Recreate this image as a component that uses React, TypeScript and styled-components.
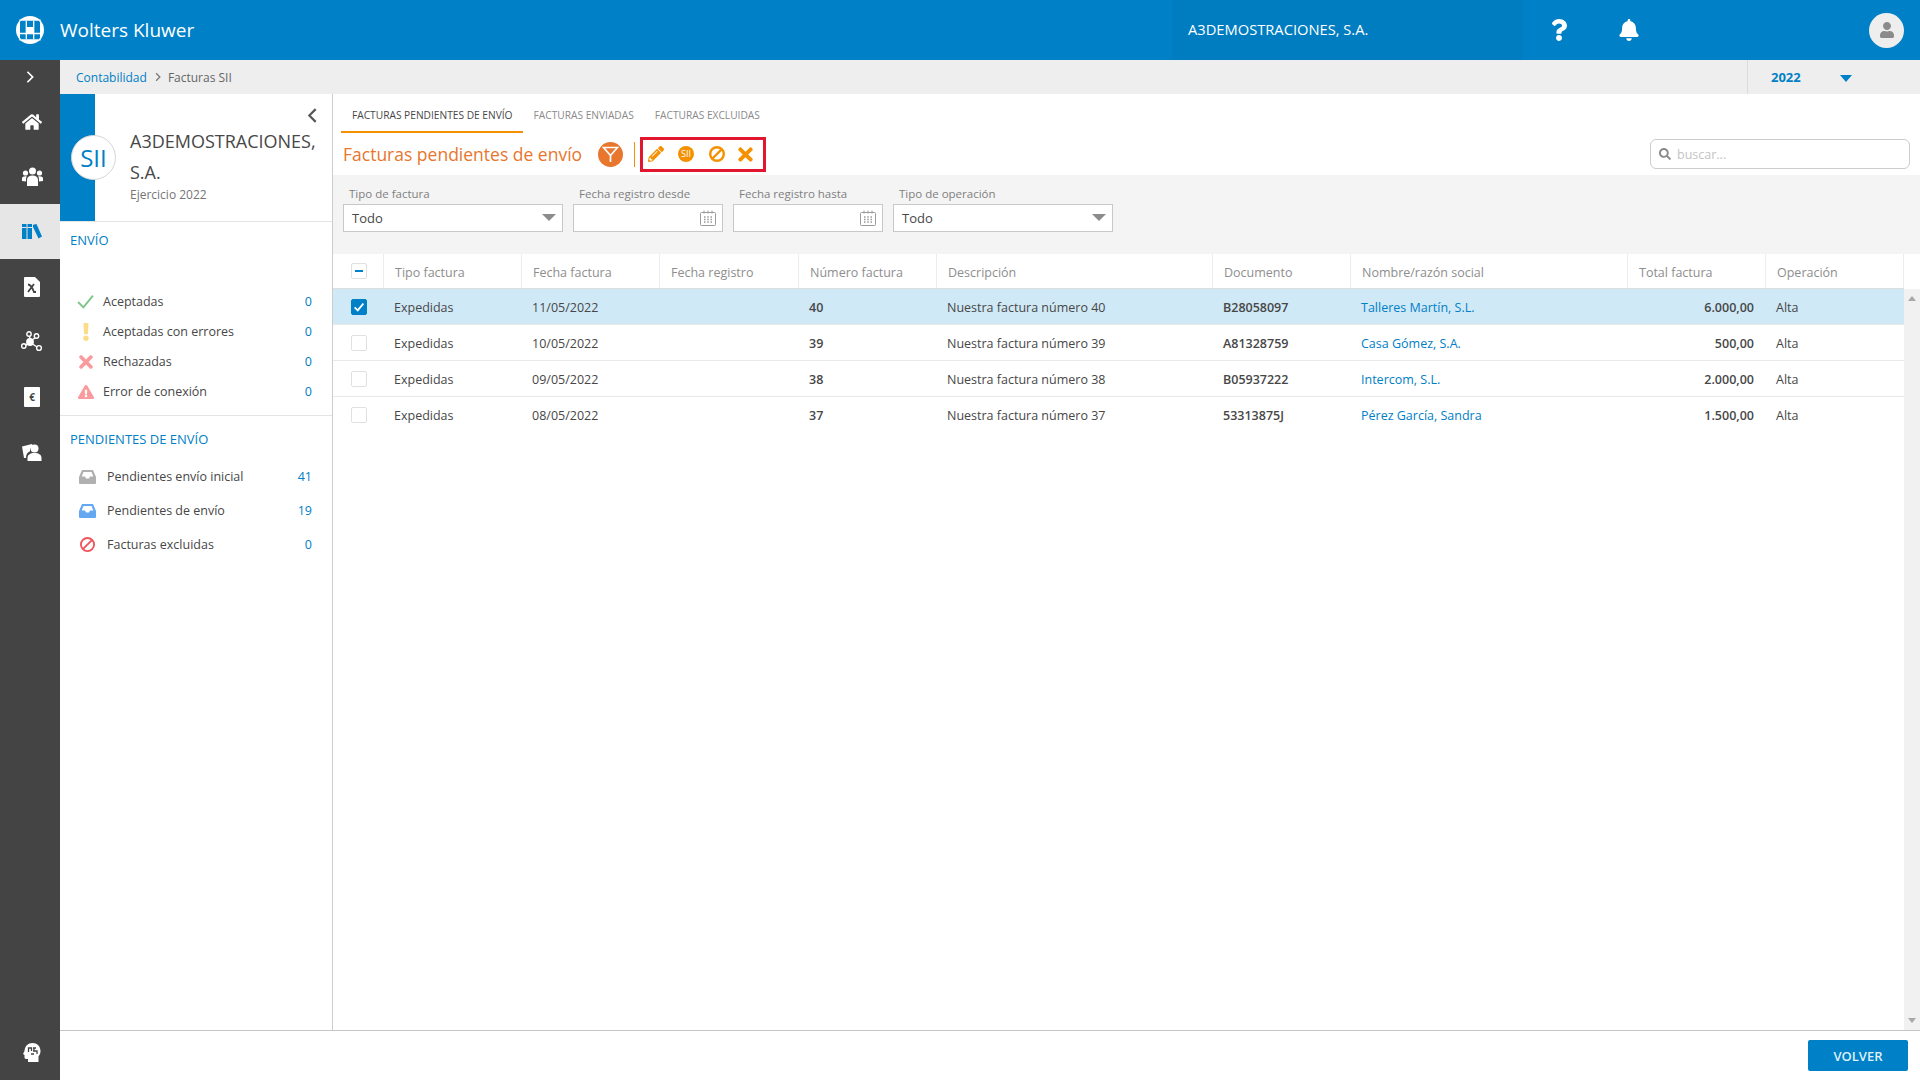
import { ReactNode } from "react";
import styled, { createGlobalStyle } from "styled-components";
import { FaBell, FaExclamation, FaExclamationTriangle, FaHome, FaPencilAlt, FaQuestion, FaSearch, FaTimes, FaUser } from "react-icons/fa";

const BLUE = "#0080c6";
const ORANGE = "#f59100";

const GlobalStyle = createGlobalStyle`
  html, body { margin: 0; padding: 0; height: 100%; overflow: hidden; background: #fff; }
  body { font-family: "Open Sans", "Noto Sans", sans-serif; color: #474747; }
  * { box-sizing: border-box; }
`;

const Page = styled.div`
  width: 1920px;
  height: 1080px;
  display: flex;
  flex-direction: column;
`;

const TopBar = styled.header`
  height: 60px;
  flex: none;
  display: flex;
  align-items: center;
  background: ${BLUE};
  color: #fff;
`;

const LogoCell = styled.div`
  width: 60px;
  display: flex;
  justify-content: center;
`;

const Brand = styled.div`
  font-size: 19px;
  font-weight: 500;
  flex: 1;
  padding-bottom: 1px;
`;

const CompanyBlock = styled.div`
  width: 351px;
  height: 60px;
  padding: 0 0 2px 16px;
  display: flex;
  align-items: center;
  font-size: 14.7px;
  font-weight: 500;
  background: #007cc0;
`;

const TopIcons = styled.div`
  display: flex;
  align-items: center;
  height: 60px;
  font-size: 22px;
`;

const TopIcon = styled.div<{ $w: number }>`
  width: ${(p) => p.$w}px;
  display: flex;
  justify-content: center;
`;

const Avatar = styled.div`
  width: 35px;
  height: 35px;
  margin-left: 206px;
  margin-right: 16px;
  border-radius: 50%;
  background: #eee;
  color: #8b8b8b;
  font-size: 16px;
  display: flex;
  align-items: center;
  justify-content: center;
`;

const Body = styled.div`
  flex: 1;
  display: flex;
  min-height: 0;
`;

const Rail = styled.nav`
  width: 60px;
  flex: none;
  background: #444;
  color: #fff;
  display: flex;
  flex-direction: column;
`;

const RailToggle = styled.div`
  height: 34px;
  display: flex;
  align-items: center;
  justify-content: center;
`;

const RailItem = styled.div<{ $active?: boolean }>`
  height: 55px;
  padding-left: 4px;
  display: flex;
  align-items: center;
  justify-content: center;
  font-size: 20px;
  background: ${(p) => (p.$active ? "#e6e6e6" : "transparent")};
  color: ${(p) => (p.$active ? BLUE : "#fff")};
`;

const RailBottom = styled(RailItem)`
  margin-top: auto;
`;

const EuroTile = styled.div`
  width: 16px;
  height: 20px;
  border-radius: 1px;
  background: #fff;
  color: #444;
  font-size: 10px;
  font-weight: 700;
  line-height: 20px;
  text-align: center;
`;

const Content = styled.div`
  flex: 1;
  display: flex;
  flex-direction: column;
  min-width: 0;
`;

const Crumbs = styled.div`
  height: 34px;
  flex: none;
  background: #eee;
  display: flex;
  align-items: center;
  padding-left: 16px;
  font-size: 12px;
  color: #666;
`;

const CrumbLink = styled.span`
  color: ${BLUE};
`;

const CrumbSep = styled.span`
  margin: 0 5px 0 6px;
  display: flex;
`;

const YearBlock = styled.div`
  margin-left: auto;
  width: 173px;
  height: 34px;
  border-left: 1px solid #dcdcdc;
  padding: 0 0 1px 23px;
  display: flex;
  align-items: center;
  color: ${BLUE};
  font-weight: 700;
  font-size: 13px;
`;

const YearCaret = styled.span`
  margin-left: 39px;
  margin-top: 3px;
  border-left: 6.5px solid transparent;
  border-right: 6.5px solid transparent;
  border-top: 7px solid ${BLUE};
`;

const Workspace = styled.div`
  flex: 1;
  display: flex;
  min-height: 0;
`;

const SidePanel = styled.aside`
  width: 273px;
  flex: none;
  border-right: 1px solid #ccc;
  display: flex;
  flex-direction: column;
`;

const PanelHead = styled.div`
  position: relative;
  height: 128px;
  flex: none;
  display: flex;
  border-bottom: 1px solid #e4e4e4;
`;

const Stripe = styled.div`
  width: 35px;
  height: 127px;
  background: ${BLUE};
`;

const SiiBadge = styled.div`
  position: absolute;
  left: 11px;
  top: 41px;
  width: 45px;
  height: 45px;
  border-radius: 50%;
  background: #fff;
  border: 1px solid #d6d6d6;
  color: ${BLUE};
  font-size: 24px;
  display: flex;
  align-items: center;
  justify-content: center;
`;

const PanelInfo = styled.div`
  flex: 1;
  padding: 10px 0 0 35px;
  display: flex;
  flex-direction: column;
`;

const Collapse = styled.div`
  height: 22px;
  padding-right: 11px;
  display: flex;
  justify-content: flex-end;
  align-items: center;
`;

const CompanyName = styled.div`
  font-size: 18px;
  line-height: 31px;
  white-space: nowrap;
  color: #474747;
`;

const Exercise = styled.div`
  font-size: 12px;
  line-height: 14px;
  color: #757575;
`;

const SectionTitle = styled.div<{ $h: number; $pad: number }>`
  height: ${(p) => p.$h}px;
  padding: ${(p) => p.$pad}px 0 0 10px;
  font-size: 13px;
  line-height: 22px;
  color: ${BLUE};
`;

const SideList = styled.div<{ $gap?: number }>`
  padding-bottom: ${(p) => p.$gap ?? 0}px;
  border-bottom: ${(p) => (p.$gap ? "1px solid #e4e4e4" : "none")};
`;

const SideRow = styled.div<{ $h: number; $iconW: number }>`
  height: ${(p) => p.$h}px;
  padding: 0 20px 1px 0;
  display: grid;
  grid-template-columns: ${(p) => p.$iconW}px 1fr auto;
  align-items: center;
  font-size: 12.5px;
`;

const SideIcon = styled.div<{ $color: string; $size: number }>`
  display: flex;
  justify-content: center;
  padding-left: 10px;
  margin-right: 2px;
  color: ${(p) => p.$color};
  font-size: ${(p) => p.$size}px;
`;

const SideCount = styled.div`
  color: ${BLUE};
`;

const Main = styled.main`
  flex: 1;
  display: flex;
  flex-direction: column;
  min-width: 0;
`;

const Tabs = styled.div`
  height: 39px;
  flex: none;
  padding-left: 8px;
  display: flex;
`;

const Tab = styled.div<{ $active?: boolean }>`
  height: 39px;
  padding: 4px 10px 0 11px;
  display: flex;
  align-items: center;
  font-size: 10.2px;
  color: ${(p) => (p.$active ? "#474747" : "#8a8a8a")};
  border-bottom: 2px solid ${(p) => (p.$active ? ORANGE : "transparent")};
`;

const TitleRow = styled.div`
  height: 42px;
  flex: none;
  padding: 0 10px;
  display: flex;
  align-items: center;
`;

const Title = styled.h1`
  margin: 0 0 1px;
  width: 255px;
  font-size: 17.5px;
  font-weight: 400;
  white-space: nowrap;
  color: #e8762d;
`;

const FilterDot = styled.div`
  width: 25px;
  height: 25px;
  border-radius: 50%;
  background: #e8762d;
  display: flex;
  align-items: center;
  justify-content: center;
`;

const ActionSep = styled.div`
  width: 1px;
  height: 25px;
  margin: 0 5px 0 11px;
  background: ${ORANGE};
`;

const ActionBox = styled.div`
  width: 126px;
  height: 35px;
  border: 3px solid #e2162f;
  display: grid;
  grid-template-columns: 26px 34px 27px 30px;
  align-items: center;
  justify-items: center;
  color: ${ORANGE};
  font-size: 16px;
`;

const SiiIcon = styled.div`
  width: 16px;
  height: 16px;
  border-radius: 50%;
  background: ${ORANGE};
  color: #fff;
  font-size: 9px;
  line-height: 16px;
  text-align: center;
`;

const Search = styled.div`
  margin-left: auto;
  width: 260px;
  height: 30px;
  border: 1px solid #ccc;
  border-radius: 6px;
  padding-left: 8px;
  display: flex;
  align-items: center;
  gap: 6px;
  font-size: 12.5px;
  color: #c4c4c4;
  svg { color: #8a8a8a; font-size: 12px; }
`;

const FilterBand = styled.div`
  height: 79px;
  flex: none;
  background: #f4f4f4;
  padding: 12px 0 0 10px;
  display: flex;
  gap: 10px;
`;

const Field = styled.div<{ $w: number }>`
  width: ${(p) => p.$w}px;
`;

const FieldLabel = styled.div`
  height: 17px;
  padding-left: 6px;
  font-size: 11.5px;
  line-height: 13px;
  color: #808080;
`;

const FieldBox = styled.div`
  height: 28px;
  background: #fff;
  border: 1px solid #c8c8c8;
  padding: 0 6px 1px 8px;
  display: flex;
  align-items: center;
  justify-content: space-between;
  font-size: 13px;
  color: #474747;
`;

const SelectCaret = styled.span`
  border-left: 7px solid transparent;
  border-right: 7px solid transparent;
  border-top: 7px solid #8c8c8c;
`;

const TableArea = styled.div`
  flex: 1;
  display: grid;
  grid-template-columns: 1fr 16px;
  grid-template-rows: 35px 1fr;
  min-height: 0;
`;

const COLS = "51px 138px 138px 139px 138px 276px 138px 277px 138px 138px";

const HeadRow = styled.div`
  grid-column: 1 / 2;
  display: grid;
  grid-template-columns: ${COLS};
  border-bottom: 1px solid #dedede;
`;

const HeadCell = styled.div`
  padding: 2px 0 0 11px;
  display: flex;
  align-items: center;
  border-right: 1px solid #ececec;
  font-size: 12.5px;
  color: #8e8e8e;
`;

const CheckCell = styled.div`
  padding-left: 18px;
  display: flex;
  align-items: center;
  border-right: 1px solid #ececec;
`;

const HeadCorner = styled.div``;

const Rows = styled.div`
  grid-column: 1 / 2;
`;

const Row = styled.div<{ $selected?: boolean }>`
  height: 36px;
  display: grid;
  grid-template-columns: ${COLS};
  align-items: center;
  font-size: 12.5px;
  background: ${(p) => (p.$selected ? "#d0e9f7" : "#fff")};
  border-bottom: 1px solid #e8e8e8;
  &:last-child { border-bottom: 0; }
`;

const RowCheck = styled.div`
  padding-left: 18px;
  display: flex;
  align-items: center;
`;

const Cell = styled.div<{ $bold?: boolean; $link?: boolean; $right?: boolean }>`
  padding: ${(p) => (p.$right ? "1px 12px 0 0" : "1px 0 0 10px")};
  text-align: ${(p) => (p.$right ? "right" : "left")};
  font-weight: ${(p) => (p.$bold ? 600 : 400)};
  color: ${(p) => (p.$link ? BLUE : "#474747")};
  white-space: nowrap;
`;

const Box = styled.div<{ $checked?: boolean }>`
  width: 16px;
  height: 16px;
  border-radius: 2px;
  border: 1px solid ${(p) => (p.$checked ? BLUE : "#e0e0e0")};
  background: ${(p) => (p.$checked ? BLUE : "#fff")};
  color: #fff;
  display: flex;
  align-items: center;
  justify-content: center;
`;

const Dash = styled.span`
  width: 8px;
  height: 2px;
  background: ${BLUE};
`;

const Scrollbar = styled.div`
  grid-column: 2;
  grid-row: 2;
  background: #f1f1f1;
  display: flex;
  flex-direction: column;
  justify-content: space-between;
  align-items: center;
  padding: 7px 0;
`;

const ScrollArrow = styled.span<{ $up?: boolean }>`
  border-left: 4px solid transparent;
  border-right: 4px solid transparent;
  border-bottom: ${(p) => (p.$up ? "5px solid #a8a8a8" : "none")};
  border-top: ${(p) => (p.$up ? "none" : "5px solid #a8a8a8")};
`;

const Footer = styled.footer`
  height: 50px;
  flex: none;
  border-top: 1px solid #c6c6c6;
  padding: 9px 12px 0 0;
  display: flex;
  justify-content: flex-end;
`;

const PrimaryButton = styled.button`
  width: 100px;
  height: 31px;
  border: 0;
  border-radius: 2px;
  background: ${BLUE};
  color: #dff1fb;
  font-family: inherit;
  font-size: 13px;
  font-weight: 600;
`;

const LogoMark = () => (
  <svg width="28" height="28" viewBox="0 0 28 28">
    <circle cx="14" cy="14" r="14" fill="#fff" />
    <path d="M4 4.500h20v19H4z" fill={BLUE} />
    <path d="M4 5.500V4h20v2M4 22v2h20v-2" stroke="#fff" strokeWidth="1.200" fill="none" />
    <path d="M10.300 5v18M17.700 5v18M4 17.500h20" stroke="#fff" strokeWidth="1.300" />
    <rect x="10.500" y="11" width="7" height="6.500" fill="#fff" />
  </svg>
);

const Chevron = ({ dir, size, color }: { dir: "left" | "right"; size: number; color: string }) => (
  <svg width={size} height={size} viewBox="0 0 16 16" fill="none" stroke={color} strokeWidth="2">
    <path d={dir === "right" ? "M5 2l6 6-6 6" : "M11 2L5 8l6 6"} />
  </svg>
);

const GroupIcon = () => (
  <svg width="21" height="19" viewBox="0 0 21 19" fill="#fff">
    <circle cx="3.500" cy="6" r="2.600" />
    <circle cx="17.500" cy="6" r="2.600" />
    <circle cx="10.500" cy="4" r="3.500" />
    <path d="M0 14v-2.500C0 10 1.500 9.300 3.500 9.300c.6 0 1 .1 1.300.2C4.200 10.300 4 11.300 4 13v1.500zM21 14v-2.500c0-1.500-1.500-2.200-3.500-2.200-.6 0-1 .1-1.300.2.600.8.800 1.800.800 3.500v1.500z" />
    <path d="M5 19v-6c0-3 2-4.500 5.500-4.500S16 10 16 13v6z" />
  </svg>
);

const BooksIcon = () => (
  <svg width="20" height="15" viewBox="0 0 20 15" fill={BLUE}>
    <rect x="0" y="0" width="4.500" height="15" />
    <rect x="0" y="3" width="4.500" height="1" fill="#e6e6e6" />
    <rect x="5.500" y="0" width="4.500" height="15" />
    <rect x="5.500" y="3" width="4.500" height="1" fill="#e6e6e6" />
    <path d="M11 .8L14.500 0 20 12.500 16.500 14.500 11 3z" />
  </svg>
);

const SheetIcon = ({ children }: { children: ReactNode }) => (
  <svg width="16" height="20" viewBox="0 0 16 20">
    <path d="M1 0h10l5 5v14a1 1 0 0 1-1 1H1a1 1 0 0 1-1-1V1a1 1 0 0 1 1-1z" fill="#fff" />
    {children}
  </svg>
);

const NetworkIcon = () => (
  <svg width="22" height="22" viewBox="0 0 22 22" fill="none" stroke="#fff" strokeWidth="1.400">
    <circle cx="9" cy="11" r="3.200" fill="#fff" />
    <circle cx="8" cy="3" r="2.200" />
    <circle cx="15.500" cy="5" r="2.200" />
    <circle cx="2.800" cy="15" r="2.200" />
    <circle cx="18" cy="17" r="2.400" />
    <path d="M8.500 5.200L9 8M14 7l-3 2M7 13l-2.400 1M11.500 13l4.500 3" />
  </svg>
);

const PeopleFileIcon = () => (
  <svg width="20" height="20" viewBox="0 0 20 20" fill="#fff">
    <path d="M0 4.500L10 2l1 2.400C8.800 5 7.600 7 8 9.300c-2.500 1-4 3-4 6.700H2z" />
    <circle cx="12.500" cy="6.500" r="4" />
    <path d="M5.500 19v-3c0-3 2.500-5 7-5s7 2 7 5v3z" />
  </svg>
);

const HeadIcon = () => (
  <svg width="18" height="19" viewBox="0 0 18 19">
    <path d="M9.500 0C14 0 17.500 3 17.500 8c0 2.600-1 4-2 5.500V19H5v-3H3c-1 0-1.500-.8-1.500-1.500V12L0 11l1.500-3C1.800 3 5 0 9.500 0z" fill="#fff" />
    <path d="M5.500 9V5h3v3M10 5h3M10 8h4v3M11 5v3M8 11h3" stroke="#444" strokeWidth="1.300" fill="none" />
  </svg>
);

const FunnelIcon = () => (
  <svg width="17" height="17" viewBox="0 0 17 17" fill="none" stroke="#fff" strokeWidth="1.700">
    <path d="M1.500 1.500h14L8.500 9.500zM8.500 9.500V16" />
  </svg>
);

const CalendarIcon = () => (
  <svg width="16" height="16" viewBox="0 0 16 16" fill="none" stroke="#9a9a9a">
    <rect x="0.500" y="2.500" width="15" height="13" rx="1" />
    <path d="M4 0.500v3M8 0.500v3M12 0.500v3" />
    <path d="M4 7h1.500M7.300 7h1.500M10.500 7H12M4 9.500h1.500M7.300 9.500h1.500M10.500 9.500H12M4 12h1.500M7.300 12h1.500M10.500 12H12" strokeWidth="1.300" />
  </svg>
);

const CheckMark = ({ size, width }: { size: number; width: number }) => (
  <svg width={size} height={size} viewBox="0 0 16 16" fill="none" stroke="currentColor" strokeWidth={width}>
    <path d="M1 8.500L6 13.500 15 2.500" />
  </svg>
);

const BanMark = ({ size, width }: { size: number; width: number }) => (
  <svg width={size} height={size} viewBox="0 0 16 16" fill="none" stroke="currentColor" strokeWidth={width}>
    <circle cx="8" cy="8" r={8 - width / 2} />
    <path d="M3 13L13 3" />
  </svg>
);

const TrayIcon = () => (
  <svg width="17" height="14" viewBox="0 0 17 14" fill="currentColor">
    <path d="M3 0h11l3 7v6a1 1 0 0 1-1 1H1a1 1 0 0 1-1-1V7zM4.500 2L2.700 6.500H6L7 8.500h3l1-2h3.300L12.500 2z" fillRule="evenodd" />
  </svg>
);

const envioRows = [
  { icon: <CheckMark size={17} width={1.800} />, color: "#7ec58a", size: 17, label: "Aceptadas", count: "0" },
  { icon: <FaExclamation />, color: "#fbdc88", size: 18, label: "Aceptadas con errores", count: "0" },
  { icon: <FaTimes />, color: "#fb9a9c", size: 20, label: "Rechazadas", count: "0" },
  { icon: <FaExclamationTriangle />, color: "#fb9a9c", size: 16, label: "Error de conexión", count: "0" },
];

const pendingRows = [
  { icon: <TrayIcon />, color: "#b0b0b0", size: 17, label: "Pendientes envío inicial", count: "41" },
  { icon: <TrayIcon />, color: "#63a8f0", size: 17, label: "Pendientes de envío", count: "19" },
  { icon: <BanMark size={15} width={2} />, color: "#f0545a", size: 15, label: "Facturas excluidas", count: "0" },
];

const invoices = [
  { date: "11/05/2022", num: "40", doc: "B28058097", name: "Talleres Martín, S.L.", total: "6.000,00", selected: true },
  { date: "10/05/2022", num: "39", doc: "A81328759", name: "Casa Gómez, S.A.", total: "500,00" },
  { date: "09/05/2022", num: "38", doc: "B05937222", name: "Intercom, S.L.", total: "2.000,00" },
  { date: "08/05/2022", num: "37", doc: "53313875J", name: "Pérez García, Sandra", total: "1.500,00" },
];

const headers = [
  "Tipo factura", "Fecha factura", "Fecha registro", "Número factura", "Descripción",
  "Documento", "Nombre/razón social", "Total factura", "Operación",
];

export default function App() {
  return (
    <Page>
      <GlobalStyle />
      <TopBar>
        <LogoCell><LogoMark /></LogoCell>
        <Brand>Wolters Kluwer</Brand>
        <CompanyBlock>A3DEMOSTRACIONES, S.A.</CompanyBlock>
        <TopIcons>
          <TopIcon $w={72}><FaQuestion /></TopIcon>
          <TopIcon $w={68}><FaBell /></TopIcon>
        </TopIcons>
        <Avatar><FaUser /></Avatar>
      </TopBar>

      <Body>
        <Rail>
          <RailToggle><Chevron dir="right" size={14} color="#fff" /></RailToggle>
          <RailItem><FaHome /></RailItem>
          <RailItem><GroupIcon /></RailItem>
          <RailItem $active><BooksIcon /></RailItem>
          <RailItem>
            <SheetIcon>
              <path d="M4 15l6-8M4 7.500c2.500 0 4 2 6 7.500h2" stroke="#444" strokeWidth="1.800" fill="none" />
            </SheetIcon>
          </RailItem>
          <RailItem><NetworkIcon /></RailItem>
          <RailItem><EuroTile>€</EuroTile></RailItem>
          <RailItem><PeopleFileIcon /></RailItem>
          <RailBottom><HeadIcon /></RailBottom>
        </Rail>

        <Content>
          <Crumbs>
            <CrumbLink>Contabilidad</CrumbLink>
            <CrumbSep><Chevron dir="right" size={10} color="#777" /></CrumbSep>
            <span>Facturas SII</span>
            <YearBlock>2022<YearCaret /></YearBlock>
          </Crumbs>

          <Workspace>
            <SidePanel>
              <PanelHead>
                <Stripe />
                <SiiBadge>SII</SiiBadge>
                <PanelInfo>
                  <Collapse><Chevron dir="left" size={17} color="#555" /></Collapse>
                  <CompanyName>A3DEMOSTRACIONES,<br />S.A.</CompanyName>
                  <Exercise>Ejercicio 2022</Exercise>
                </PanelInfo>
              </PanelHead>
              <SectionTitle $h={65} $pad={7}>ENVÍO</SectionTitle>
              <SideList $gap={8}>
                {envioRows.map((r) => (
                  <SideRow key={r.label} $h={30} $iconW={43}>
                    <SideIcon $color={r.color} $size={r.size}>{r.icon}</SideIcon>
                    <div>{r.label}</div>
                    <SideCount>{r.count}</SideCount>
                  </SideRow>
                ))}
              </SideList>
              <SectionTitle $h={44} $pad={12}>PENDIENTES DE ENVÍO</SectionTitle>
              <SideList>
                {pendingRows.map((r) => (
                  <SideRow key={r.label} $h={34} $iconW={47}>
                    <SideIcon $color={r.color} $size={r.size}>{r.icon}</SideIcon>
                    <div>{r.label}</div>
                    <SideCount>{r.count}</SideCount>
                  </SideRow>
                ))}
              </SideList>
            </SidePanel>

            <Main>
              <Tabs>
                <Tab $active>FACTURAS PENDIENTES DE ENVÍO</Tab>
                <Tab>FACTURAS ENVIADAS</Tab>
                <Tab>FACTURAS EXCLUIDAS</Tab>
              </Tabs>
              <TitleRow>
                <Title>Facturas pendientes de envío</Title>
                <FilterDot><FunnelIcon /></FilterDot>
                <ActionSep />
                <ActionBox>
                  <FaPencilAlt />
                  <SiiIcon>SII</SiiIcon>
                  <BanMark size={16} width={2.400} />
                  <FaTimes style={{ fontSize: 21 }} />
                </ActionBox>
                <Search><FaSearch />buscar...</Search>
              </TitleRow>
              <FilterBand>
                <Field $w={220}>
                  <FieldLabel>Tipo de factura</FieldLabel>
                  <FieldBox>Todo<SelectCaret /></FieldBox>
                </Field>
                <Field $w={150}>
                  <FieldLabel>Fecha registro desde</FieldLabel>
                  <FieldBox><span /><CalendarIcon /></FieldBox>
                </Field>
                <Field $w={150}>
                  <FieldLabel>Fecha registro hasta</FieldLabel>
                  <FieldBox><span /><CalendarIcon /></FieldBox>
                </Field>
                <Field $w={220}>
                  <FieldLabel>Tipo de operación</FieldLabel>
                  <FieldBox>Todo<SelectCaret /></FieldBox>
                </Field>
              </FilterBand>
              <TableArea>
                <HeadRow>
                  <CheckCell><Box><Dash /></Box></CheckCell>
                  {headers.map((h) => <HeadCell key={h}>{h}</HeadCell>)}
                </HeadRow>
                <HeadCorner />
                <Rows>
                  {invoices.map((inv) => (
                    <Row key={inv.num} $selected={inv.selected}>
                      <RowCheck>
                        <Box $checked={inv.selected}>
                          {inv.selected && <CheckMark size={10} width={3} />}
                        </Box>
                      </RowCheck>
                      <Cell>Expedidas</Cell>
                      <Cell>{inv.date}</Cell>
                      <Cell />
                      <Cell $bold>{inv.num}</Cell>
                      <Cell>Nuestra factura número {inv.num}</Cell>
                      <Cell $bold>{inv.doc}</Cell>
                      <Cell $link>{inv.name}</Cell>
                      <Cell $bold $right>{inv.total}</Cell>
                      <Cell>Alta</Cell>
                    </Row>
                  ))}
                </Rows>
                <Scrollbar>
                  <ScrollArrow $up />
                  <ScrollArrow />
                </Scrollbar>
              </TableArea>
            </Main>
          </Workspace>
          <Footer><PrimaryButton>VOLVER</PrimaryButton></Footer>
        </Content>
      </Body>
    </Page>
  );
}
